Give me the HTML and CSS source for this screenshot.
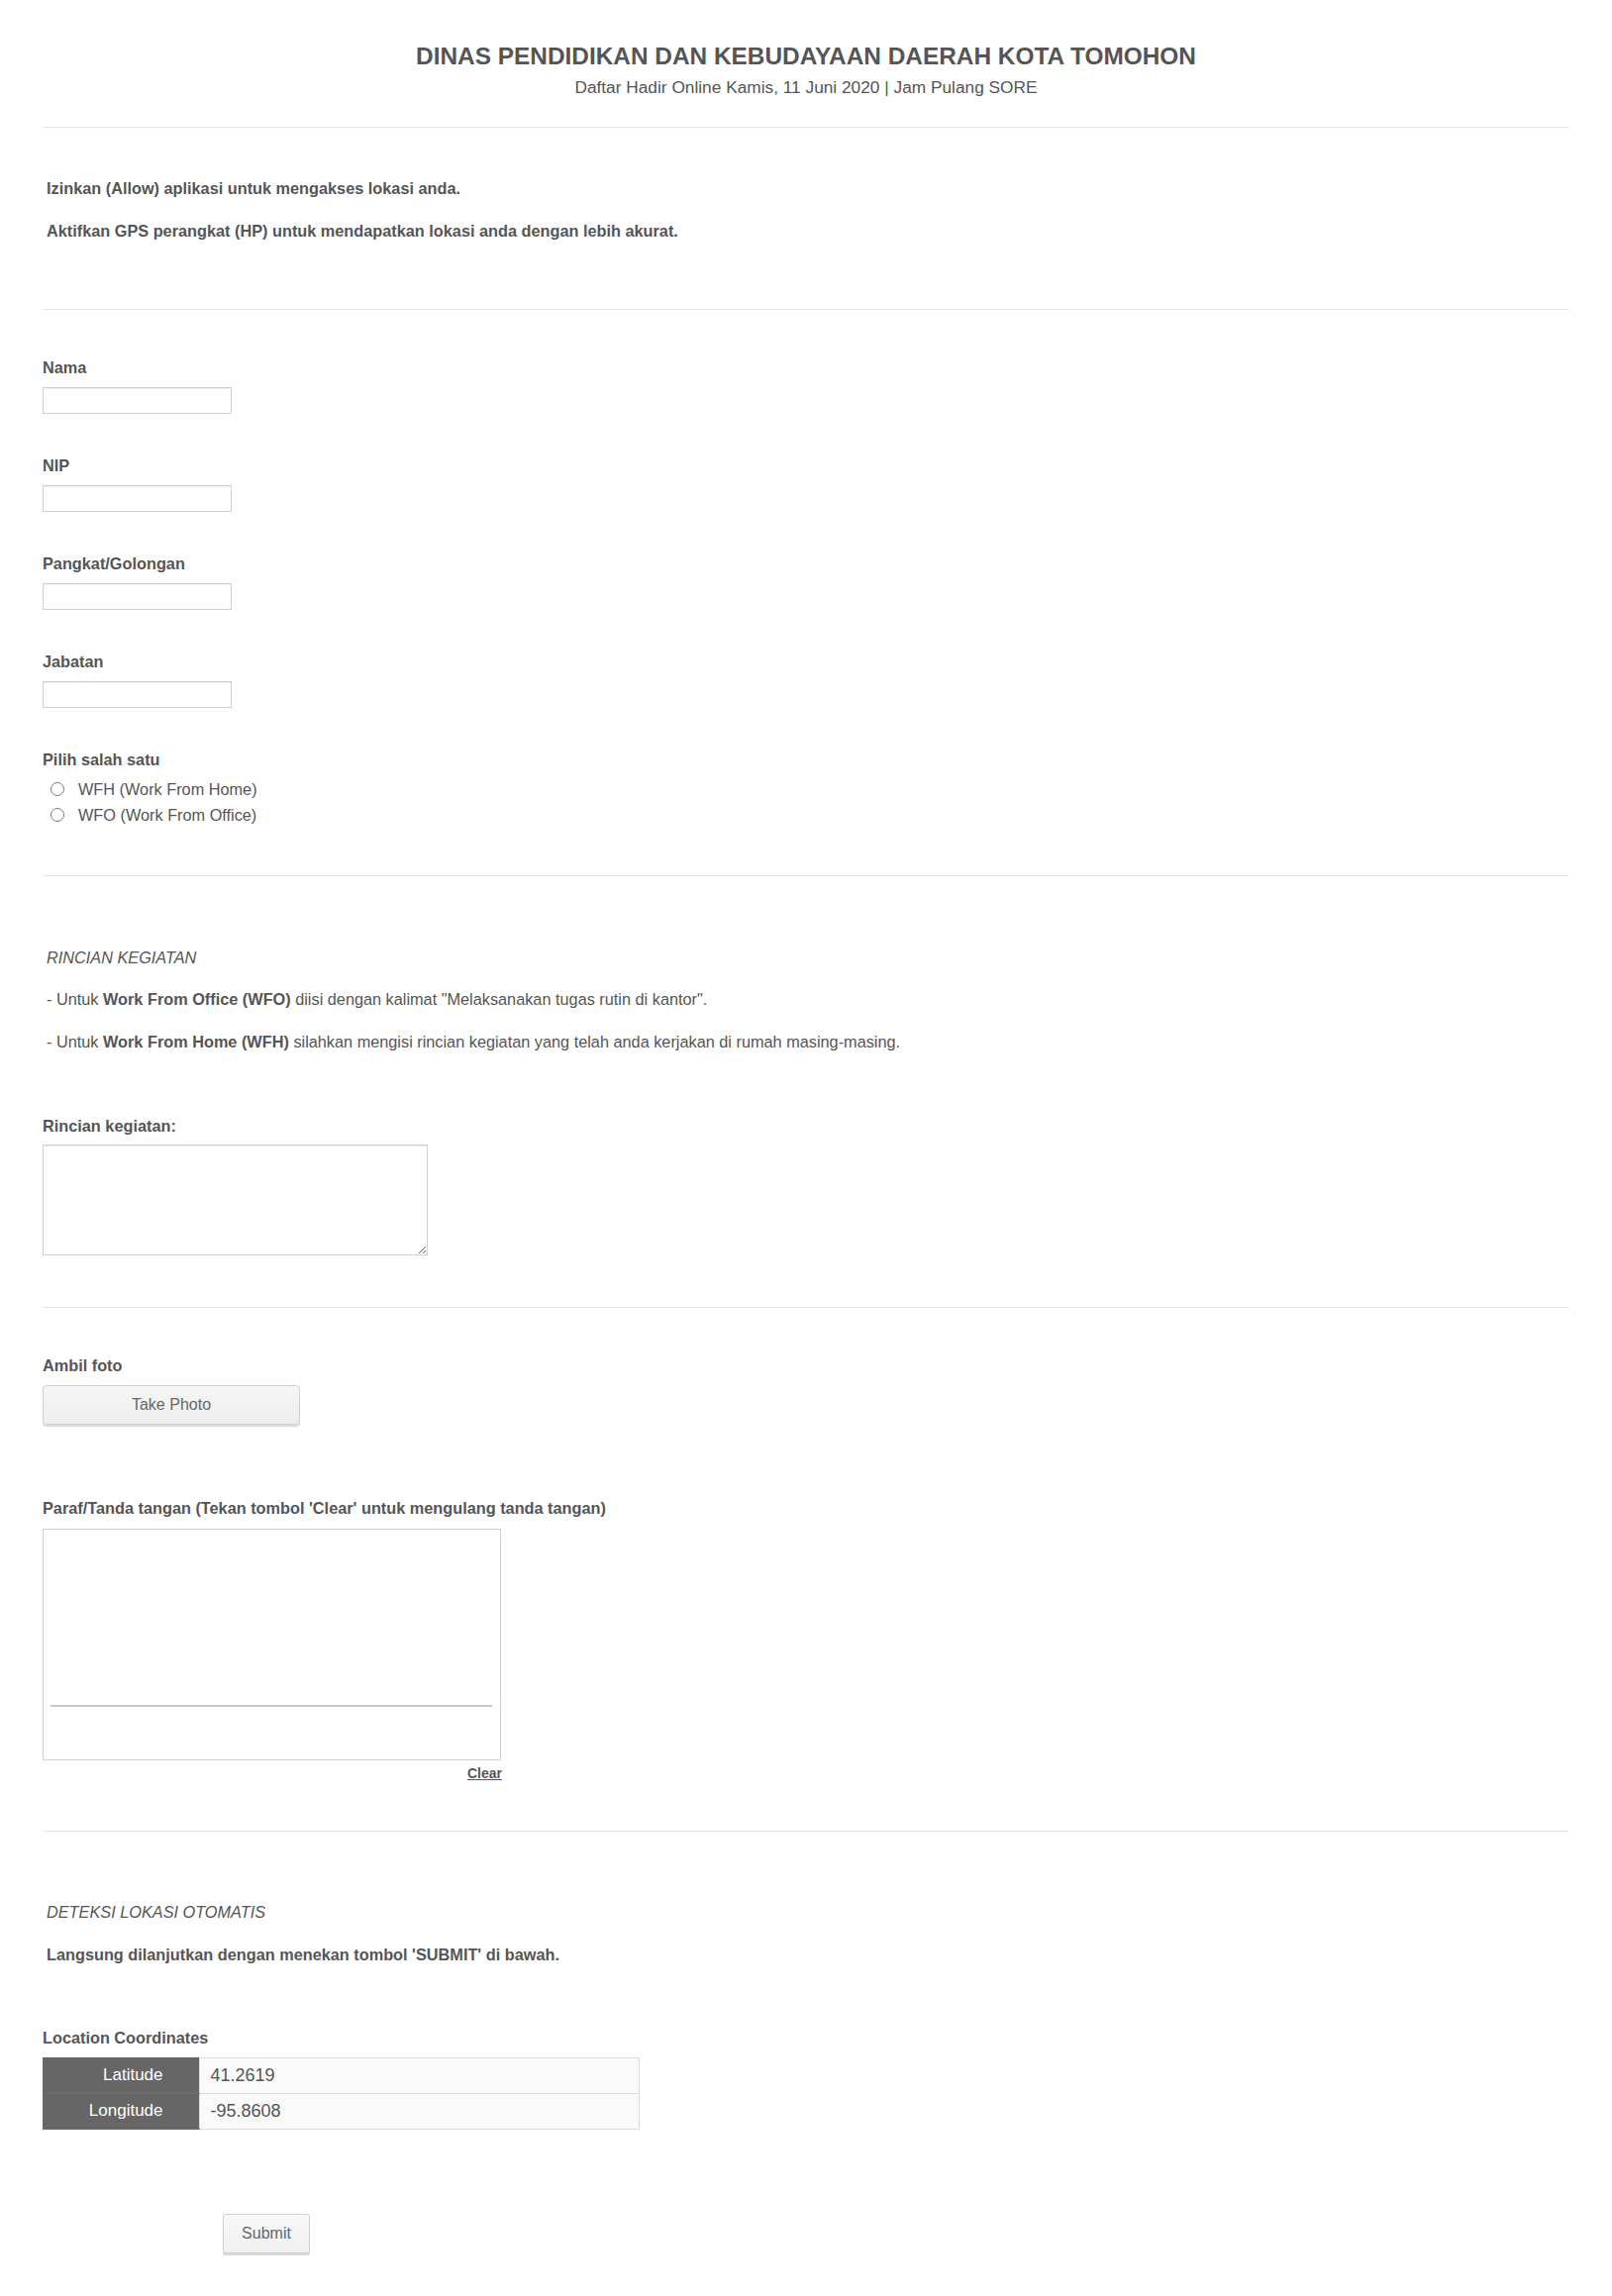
FILE: index.html
```html
<!DOCTYPE html>
<html lang="id">
<head>
    <meta charset="UTF-8">
    <meta name="viewport" content="width=device-width, initial-scale=1.0">
    <title>Daftar Hadir Online - Dinas Pendidikan dan Kebudayaan Daerah Kota Tomohon</title>
    <link rel="stylesheet" href="styles.css">
</head>
<body>
    <div class="page">
        <header class="form-header">
            <h1 class="form-title">DINAS PENDIDIKAN DAN KEBUDAYAAN DAERAH KOTA TOMOHON</h1>
            <div class="form-subtitle">Daftar Hadir Online Kamis, 11 Juni 2020 | Jam Pulang SORE</div>
        </header>

        <section class="block block-note">
            <p class="note-line">Izinkan (Allow) aplikasi untuk mengakses lokasi anda.</p>
            <p class="note-line second">Aktifkan GPS perangkat (HP) untuk mendapatkan lokasi anda dengan lebih akurat.</p>
        </section>

        <section class="block block-fields">
            <div class="field">
                <label class="field-label" for="nama">Nama</label>
                <input class="text-input" type="text" id="nama">
            </div>
            <div class="field">
                <label class="field-label" for="nip">NIP</label>
                <input class="text-input" type="text" id="nip">
            </div>
            <div class="field">
                <label class="field-label" for="pangkat">Pangkat/Golongan</label>
                <input class="text-input" type="text" id="pangkat">
            </div>
            <div class="field">
                <label class="field-label" for="jabatan">Jabatan</label>
                <input class="text-input" type="text" id="jabatan">
            </div>
            <div class="field field-last">
                <div class="field-label">Pilih salah satu</div>
                <div class="radio-list">
                    <label class="radio-item"><input type="radio" name="mode" value="wfh"> WFH (Work From Home)</label>
                    <label class="radio-item"><input type="radio" name="mode" value="wfo"> WFO (Work From Office)</label>
                </div>
            </div>
        </section>

        <section class="block block-activity">
            <p class="section-caption">RINCIAN KEGIATAN</p>
            <p class="info-line first">- Untuk <b>Work From Office (WFO)</b> diisi dengan kalimat "Melaksanakan tugas rutin di kantor".</p>
            <p class="info-line">- Untuk <b>Work From Home (WFH)</b> silahkan mengisi rincian kegiatan yang telah anda kerjakan di rumah masing-masing.</p>
            <label class="field-label activity-label" for="rincian">Rincian kegiatan:</label>
            <textarea class="activity-input" id="rincian"></textarea>
        </section>

        <section class="block block-media">
            <div class="field-label">Ambil foto</div>
            <button class="photo-btn" type="button">Take Photo</button>

            <div class="field-label sign-label">Paraf/Tanda tangan (Tekan tombol 'Clear' untuk mengulang tanda tangan)</div>
            <div class="sign-wrap">
                <div class="sign-pad">
                    <div class="sign-line"></div>
                </div>
                <div class="sign-actions"><a class="clear-link" href="#">Clear</a></div>
            </div>
        </section>

        <section class="block block-location">
            <p class="section-caption">DETEKSI LOKASI OTOMATIS</p>
            <p class="note-line loc-note">Langsung dilanjutkan dengan menekan tombol 'SUBMIT' di bawah.</p>

            <div class="field-label coords-label">Location Coordinates</div>
            <table class="coords">
                <tr>
                    <th>Latitude</th>
                    <td>41.2619</td>
                </tr>
                <tr>
                    <th>Longitude</th>
                    <td>-95.8608</td>
                </tr>
            </table>

            <div class="submit-row">
                <button class="submit-btn" type="submit">Submit</button>
            </div>
        </section>
    </div>
</body>
</html>
```

FILE: styles.css
```css
body {
    margin: 0;
    padding: 0;
    background-color: #fff;
    color: #555;
    font-family: "Liberation Sans", Arial, sans-serif;
    font-size: 16.3px;
    line-height: 20px;
}

p {
    margin: 0;
}

.page {
    padding: 0 43px;
}

/* header */

.form-header {
    padding: 43px 0 30px;
    text-align: center;
}

.form-title {
    margin: 0;
    font-size: 24.4px;
    line-height: 28px;
    font-weight: bold;
    color: #555;
}

.form-subtitle {
    margin-top: 7px;
    font-size: 17.3px;
    line-height: 20px;
}

/* sections */

.block {
    border-top: 1px solid #e6e6e6;
}

.block-note {
    padding: 50.5px 0 69px;
}

.note-line {
    padding-left: 4px;
    font-weight: bold;
}

.note-line.second {
    margin-top: 23px;
}

.block-fields {
    padding: 48px 0 48px;
}

.field {
    margin-bottom: 42px;
}

.field-last {
    margin-bottom: 0;
}

.field-label {
    display: block;
    font-weight: bold;
    line-height: 20px;
}

.text-input {
    display: block;
    box-sizing: border-box;
    width: 191px;
    height: 27px;
    margin-top: 10px;
    padding: 4px 6px;
    border: 1px solid #d0d0d0;
    border-radius: 0;
    box-shadow: inset 0 1px 1px rgba(0, 0, 0, 0.07);
    font-family: inherit;
    font-size: 15px;
    color: #555;
}

.radio-list {
    margin-top: 7px;
    padding-left: 8px;
}

.radio-item {
    display: flex;
    align-items: center;
    height: 26px;
    gap: 14px;
    line-height: 26px;
}

.radio-item input {
    appearance: none;
    -webkit-appearance: none;
    box-sizing: border-box;
    width: 14px;
    height: 14px;
    margin: 0;
    border: 1px solid #7a7a7a;
    border-radius: 50%;
    background: #fff;
}

/* rincian kegiatan */

.block-activity {
    padding: 72.5px 0 52px;
}

.section-caption {
    padding-left: 4px;
    font-style: italic;
}

.info-line {
    padding-left: 4px;
    margin-top: 23px;
}

.info-line.first {
    margin-top: 22px;
}

.activity-label {
    margin-top: 64.5px;
}

.activity-input {
    display: block;
    box-sizing: border-box;
    width: 389px;
    height: 112px;
    margin-top: 9px;
    border: 1px solid #d0d0d0;
    box-shadow: inset 0 1px 1px rgba(0, 0, 0, 0.07);
    font-family: inherit;
    font-size: 15px;
}

/* foto + tanda tangan */

.block-media {
    padding: 48.5px 0 50px;
}

.photo-btn {
    display: block;
    width: 260px;
    height: 40px;
    margin-top: 10px;
    border: 1px solid #cfcfcf;
    border-radius: 4px;
    background: linear-gradient(#f5f5f5, #eeeeee);
    box-shadow: 0 2px 0 #dcdcdc;
    font-family: inherit;
    font-size: 16px;
    color: #666;
    cursor: pointer;
}

.sign-label {
    margin-top: 73.5px;
}

.sign-wrap {
    width: 464px;
}

.sign-pad {
    box-sizing: border-box;
    width: 463px;
    height: 234px;
    margin-top: 11px;
    padding: 177px 8px 0 7px;
    border: 1px solid #d0d0d0;
}

.sign-line {
    height: 2px;
    background-color: #c8c8c8;
}

.sign-actions {
    margin-top: 4px;
    text-align: right;
    line-height: 16px;
}

.clear-link {
    font-size: 14px;
    font-weight: bold;
    color: #555;
    text-decoration: underline;
}

/* lokasi */

.block-location {
    padding: 71px 0 43px;
}

.loc-note {
    margin-top: 23px;
}

.coords-label {
    margin-top: 64px;
}

.coords {
    width: 603px;
    margin-top: 10px;
    border-collapse: collapse;
}

.coords th,
.coords td {
    height: 36px;
    padding: 0;
    box-sizing: border-box;
}

.coords th {
    width: 158px;
    padding-right: 36px;
    background-color: #666;
    color: #fff;
    font-weight: normal;
    font-size: 17px;
    text-align: right;
    border-bottom: 1px solid #707070;
}

.coords td {
    padding-left: 11px;
    background-color: #fafafa;
    border: 1px solid #dcdcdc;
    font-size: 18px;
    color: #555;
}

.submit-row {
    margin-top: 85px;
    padding-left: 182px;
}

.submit-btn {
    width: 88px;
    height: 40px;
    border: 1px solid #d0d0d0;
    border-radius: 2px;
    background: linear-gradient(#f8f8f8, #f0f0f0);
    box-shadow: 0 2px 0 #d8d8d8;
    font-family: inherit;
    font-size: 16px;
    color: #666;
    cursor: pointer;
}
```
